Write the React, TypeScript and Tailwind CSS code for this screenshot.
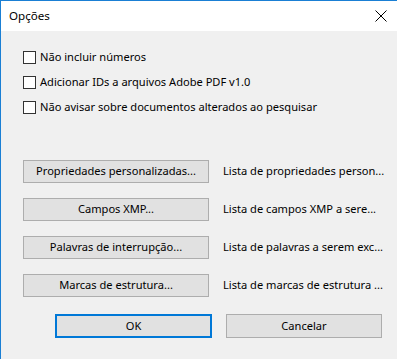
import React from 'react';

const font = { fontFamily: '"Segoe UI", "Noto Sans", "Open Sans", sans-serif' };

const options = [
  'Não incluir números',
  'Adicionar IDs a arquivos Adobe PDF v1.0',
  'Não avisar sobre documentos alterados ao pesquisar',
];

const actions = [
  { button: 'Propriedades personalizadas...', label: 'Lista de propriedades person...' },
  { button: 'Campos XMP...', label: 'Lista de campos XMP a sere...' },
  { button: 'Palavras de interrupção...', label: 'Lista de palavras a serem exc...' },
  { button: 'Marcas de estrutura...', label: 'Lista de marcas de estrutura ...' },
];

export default function App() {
  return (
    <div
      className="w-[397px] h-[359px] bg-[#f0f0f0] border-l border-t border-[#1a7fd4] text-[11.1px] text-black flex flex-col overflow-hidden"
      style={font}
    >
      {/* Title bar */}
      <div className="h-[30px] bg-white flex items-center justify-between pl-[8px] pr-[9px] shrink-0">
        <span className="text-[11.6px]">Opções</span>
        <svg width="12" height="12" viewBox="0 0 12 12" className="mr-[1px]">
          <path d="M0.5 0.5 L11.5 11.5 M11.5 0.5 L0.5 11.5" stroke="#000" strokeWidth="1" />
        </svg>
      </div>

      {/* Body */}
      <div className="flex flex-col pl-[22px]">
        <div className="flex flex-col mt-[14px]">
          {options.map((o) => (
            <label key={o} className="h-[25px] flex items-center gap-[4px]">
              <span className="w-[13px] h-[13px] border border-[#333] bg-white shrink-0" />
              <span className="whitespace-nowrap">{o}</span>
            </label>
          ))}
        </div>

        <div className="flex flex-col gap-[15px] mt-[40px]">
          {actions.map((a) => (
            <div key={a.button} className="flex items-center gap-[14px]">
              <button className="w-[186px] h-[23px] bg-[#e1e1e1] border border-[#adadad] text-[11.1px] shrink-0">
                {a.button}
              </button>
              <span className="whitespace-nowrap">{a.label}</span>
            </div>
          ))}
        </div>

        <div className="flex gap-[14px] mt-[17px] pl-[32px]">
          <button className="w-[157px] h-[24px] bg-[#e1e1e1] border-2 border-[#0078d7] text-[11.1px]">
            OK
          </button>
          <button className="w-[156px] h-[24px] bg-[#e1e1e1] border border-[#adadad] text-[11.1px]">
            Cancelar
          </button>
        </div>
      </div>
    </div>
  );
}
